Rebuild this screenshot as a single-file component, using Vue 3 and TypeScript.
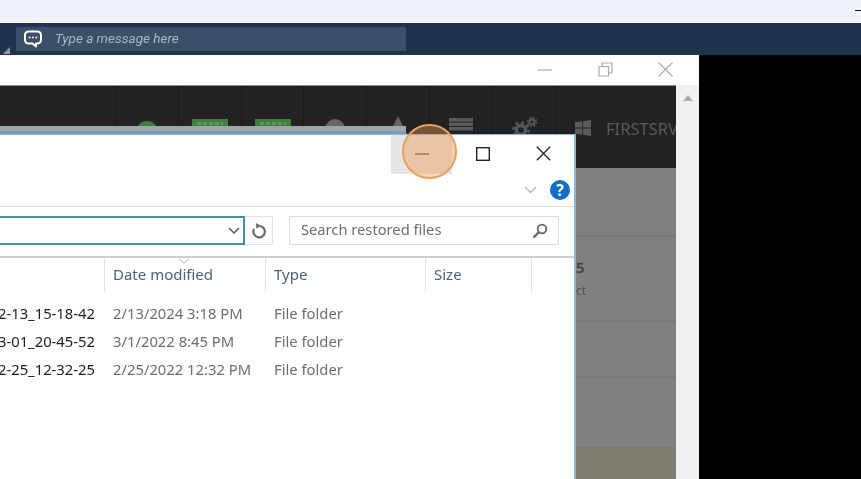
<script setup lang="ts">
interface HeaderCell {
  width: number
  kind: string
}

const headerCells: HeaderCell[] = [
  { width: 63, kind: 'dot' },
  { width: 63, kind: 'badge' },
  { width: 62, kind: 'badge' },
  { width: 63, kind: 'info' },
  { width: 63, kind: 'warn' },
  { width: 63, kind: 'server' },
  { width: 63, kind: 'gears' },
]

const columns = ['Date modified', 'Type', 'Size']

const rows = [
  { name: '2-13_15-18-42', date: '2/13/2024 3:18 PM', type: 'File folder' },
  { name: '3-01_20-45-52', date: '3/1/2022 8:45 PM', type: 'File folder' },
  { name: '2-25_12-32-25', date: '2/25/2022 12:32 PM', type: 'File folder' },
]
</script>

<template>
  <div class="screen">
    <div class="top-strip"><span class="top-dash"></span></div>

    <div class="chat-bar">
      <span class="grip"></span>
      <div class="chat-input">
        <svg class="chat-icon" width="20" height="20" viewBox="0 0 20 20" fill="none">
          <path d="M5.5 2.5h9a3.5 3.5 0 0 1 3.5 3.5v5a3.5 3.5 0 0 1-3.5 3.5h-1.5v3l-3.5-3H5.5A3.5 3.5 0 0 1 2 11V6a3.5 3.5 0 0 1 3.5-3.5z" stroke="#fff" stroke-width="2" stroke-linejoin="round" />
          <circle cx="6.6" cy="8.5" r="1" fill="#fff" />
          <circle cx="10" cy="8.5" r="1" fill="#fff" />
          <circle cx="13.4" cy="8.5" r="1" fill="#fff" />
        </svg>
        <span class="chat-placeholder">Type a message here</span>
      </div>
    </div>

    <div class="desktop">
      <div class="outer-window">
        <div class="outer-title">
          <svg class="outer-btn" width="15" height="15" viewBox="0 0 15 15" fill="none">
            <path d="M0 8h14" stroke="#b5b5b5" stroke-width="1.4" />
          </svg>
          <svg class="outer-btn" width="15" height="15" viewBox="0 0 15 15" fill="none">
            <path d="M1 4.5h9.500v9.500H1zM4 4.500V1h10v10h-3.500" stroke="#a9a9a9" stroke-width="1.200" />
          </svg>
          <svg class="outer-btn" width="15" height="15" viewBox="0 0 15 15" fill="none">
            <path d="M.5.500l14 14M14.500.500l-14 14" stroke="#b0b0b0" stroke-width="1.300" />
          </svg>
        </div>

        <div class="outer-body">
          <div class="app">
            <div class="app-header">
              <div class="header-spacer"></div>
              <div v-for="(cell, i) in headerCells" :key="i" class="header-cell" :style="{ width: cell.width + 'px' }">
                <span v-if="cell.kind === 'dot'" class="h-dot"></span>
                <span v-else-if="cell.kind === 'badge'" class="h-badge"><i></i></span>
                <span v-else-if="cell.kind === 'info'" class="h-info"></span>
                <span v-else-if="cell.kind === 'warn'" class="h-warn"></span>
                <svg v-else-if="cell.kind === 'server'" width="24" height="18" viewBox="0 0 24 18" fill="#5a5a5a">
                  <rect x="0" y="2" width="24" height="3.500" />
                  <rect x="0" y="6.500" width="24" height="3.500" />
                  <rect x="0" y="11" width="24" height="3.500" />
                </svg>
                <svg v-else width="27" height="24" viewBox="0 0 27 24" fill="none" stroke="#585858">
                  <circle cx="10" cy="14" r="4.500" stroke-width="3.400" />
                  <circle cx="10" cy="14" r="7.500" stroke-width="2.600" stroke-dasharray="2.800 3.100" />
                  <circle cx="21" cy="6" r="2.600" stroke-width="2" />
                  <circle cx="21" cy="6" r="4.400" stroke-width="1.800" stroke-dasharray="1.800 1.650" />
                </svg>
              </div>
              <div class="server-name">
                <svg width="16" height="16" viewBox="0 0 17 17" fill="#5c5c5c">
                  <path d="M0 2.500l7.700-1.200v6.800H0zM8.600 1.200L17 0v8.100H8.600zM0 9h7.700v6.800L0 14.600zM8.600 9H17v8l-8.400-1.200z" />
                </svg>
                <span>FIRSTSRV</span>
              </div>
            </div>

            <div class="panel panel-a"></div>
            <div class="panel panel-b">
              <div class="peek-num">5</div>
              <div class="peek-sub">ct</div>
            </div>
            <div class="panel panel-c"></div>
            <div class="panel panel-d"></div>
            <div class="panel panel-e"></div>
          </div>

          <div class="scrollbar">
            <span class="scroll-up"></span>
          </div>
        </div>
      </div>
      <div class="black"></div>

      <!-- dialog window floats over the app -->
      <div class="dialog-shadow"></div>
      <div class="dialog">
        <div class="caption">
          <button class="cap-btn hovered">
            <svg width="14" height="14" viewBox="0 0 14 14"><path d="M0 7h14" stroke="#3a3a3a" stroke-width="1.200" /></svg>
          </button>
          <button class="cap-btn">
            <svg width="14" height="14" viewBox="0 0 14 14" fill="none"><rect x=".7" y=".7" width="12.600" height="12.600" stroke="#222" stroke-width="1.400" /></svg>
          </button>
          <button class="cap-btn">
            <svg width="15" height="15" viewBox="0 0 15 15" fill="none"><path d="M.8.800l13.400 13.400M14.200.800L.8 14.200" stroke="#222" stroke-width="1.300" /></svg>
          </button>
        </div>

        <div class="ribbon">
          <svg width="13" height="8" viewBox="0 0 13 8" fill="none"><path d="M1 1l5.500 5.500L12 1" stroke="#b4b4b4" stroke-width="1.300" /></svg>
          <span class="help">?</span>
        </div>

        <div class="address-row">
          <div class="address">
            <svg width="12" height="8" viewBox="0 0 12 8" fill="none"><path d="M1 1l5 5 5-5" stroke="#555" stroke-width="1.500" /></svg>
          </div>
          <div class="refresh">
            <svg width="16" height="16" viewBox="0 0 16 16" fill="none">
              <path d="M8.500 3A5.700 5.700 0 1 1 3.100 6" stroke="#6a6a6a" stroke-width="2.200" />
              <path d="M5 0l4.800 2.800L5.400 5.800z" fill="#6a6a6a" />
            </svg>
          </div>
          <div class="search">
            <span class="search-text">Search restored files</span>
            <svg width="16" height="16" viewBox="0 0 16 16" fill="none">
              <circle cx="10" cy="6" r="4.300" stroke="#666" stroke-width="1.800" />
              <path d="M7 9l-5.500 5.500" stroke="#666" stroke-width="2.400" />
            </svg>
          </div>
        </div>

        <div class="file-table">
          <div class="col-head name-col"></div>
          <div v-for="(col, i) in columns" :key="col" class="col-head">
            {{ col }}
            <svg v-if="i === 0" class="sort-mark" width="12" height="6" viewBox="0 0 12 6" fill="none"><path d="M1 .5l5 4.500 5-4.500" stroke="#b5b5b5" /></svg>
          </div>
          <div class="col-head last-col"></div>

          <div class="table-gap"></div>

          <template v-for="row in rows" :key="row.name">
            <div class="cell name-cell"><span>{{ row.name }}</span></div>
            <div class="cell">{{ row.date }}</div>
            <div class="cell">{{ row.type }}</div>
            <div class="cell"></div>
            <div class="cell"></div>
          </template>
        </div>
      </div>

      <!-- highlight ring from the walkthrough tool -->
      <div class="spotlight"></div>
    </div>
  </div>
</template>

<style>
html,
body {
  margin: 0;
  background: #000;
}
</style>

<style scoped>
.screen {
  width: 861px;
  height: 479px;
  overflow: hidden;
  display: flex;
  flex-direction: column;
  font-family: "Noto Sans", "Open Sans", sans-serif;
  filter: blur(0.35px);
}

.top-strip {
  height: 23px;
  background: #f1f3fa;
  position: relative;
  flex-shrink: 0;
}
.top-dash {
  position: absolute;
  right: 0;
  top: 10px;
  width: 6px;
  height: 1px;
  background: #111;
}

.chat-bar {
  height: 32px;
  background: #1e344e;
  padding: 4px 0 4px 16px;
  box-sizing: border-box;
  position: relative;
  flex-shrink: 0;
}
.grip {
  position: absolute;
  left: 3px;
  bottom: 1px;
  width: 0;
  height: 0;
  border-left: 7px solid transparent;
  border-bottom: 7px solid #8a99aa;
}
.chat-input {
  width: 390px;
  height: 24px;
  background: #3b5068;
  display: flex;
  align-items: center;
  padding-left: 7px;
  box-sizing: border-box;
}
.chat-icon {
  flex-shrink: 0;
}
.chat-placeholder {
  margin-left: 12px;
  margin-top: -2px;
  font-family: Roboto, sans-serif;
  font-style: italic;
  font-size: 13.5px;
  color: #a9b5c3;
}

.desktop {
  flex: 1;
  display: flex;
  position: relative;
  min-height: 0;
}
.outer-window {
  width: 699px;
  display: flex;
  flex-direction: column;
  background: #fff;
}
.black {
  flex: 1;
  background: #000;
}
.outer-title {
  height: 30px;
  flex-shrink: 0;
  display: flex;
  align-items: center;
  justify-content: flex-end;
  gap: 45px;
  padding-right: 26px;
  padding-bottom: 2px;
  box-sizing: border-box;
}

.outer-body {
  flex: 1;
  display: flex;
  min-height: 0;
}
.app {
  width: 676px;
  display: flex;
  flex-direction: column;
  background: #808080;
}
.scrollbar {
  flex: 1;
  background: #f0f0f0;
  display: flex;
  justify-content: center;
  padding-top: 10px;
}
.scroll-up {
  width: 0;
  height: 0;
  border-left: 5px solid transparent;
  border-right: 5px solid transparent;
  border-bottom: 6px solid #a8a8a8;
}

.app-header {
  height: 83px;
  flex-shrink: 0;
  display: flex;
  background: #222;
  border-top: 1px solid #8d8d8d;
  box-sizing: border-box;
}
.header-spacer {
  width: 115px;
}
.header-cell {
  flex-shrink: 0;
  border-left: 1px solid #1a1a1a;
  box-sizing: border-box;
  display: flex;
  justify-content: center;
  padding-top: 30px;
}
.h-dot {
  width: 22px;
  height: 22px;
  border-radius: 50%;
  background: #3f7d3f;
  margin-top: 5px;
}
.h-badge {
  width: 36px;
  height: 20px;
  background: #3f8040;
  margin-top: 3px;
  padding: 3px 5px 0;
  box-sizing: border-box;
}
.h-badge i {
  display: block;
  height: 3px;
  background: repeating-linear-gradient(90deg, #5f9663 0 4px, #3f8040 4px 6px);
}
.h-info {
  width: 20px;
  height: 20px;
  border-radius: 50%;
  background: #666;
  margin-top: 3px;
}
.h-warn {
  width: 0;
  height: 0;
  border-left: 10px solid transparent;
  border-right: 10px solid transparent;
  border-bottom: 20px solid #666;
}
.server-name {
  flex: 1;
  min-width: 0;
  overflow: hidden;
  display: flex;
  align-items: flex-start;
  gap: 15px;
  padding: 34px 0 0 19px;
  border-left: 1px solid #1a1a1a;
  color: #5a5a5a;
  font-size: 16.5px;
  white-space: nowrap;
  line-height: 17px;
}
.server-name svg {
  flex-shrink: 0;
}

.panel {
  box-sizing: border-box;
  border-bottom: 2px solid #787878;
  flex-shrink: 0;
}
.panel-a {
  height: 69px;
}
.panel-b {
  height: 85px;
  padding: 21px 0 0 576px;
  color: #3e3e3e;
}
.panel-c {
  height: 56px;
}
.panel-d {
  height: 71px;
}
.panel-e {
  flex: 1;
  border-bottom: 0;
  background: #7f7d70;
}
.peek-num {
  font-size: 15px;
  line-height: 18px;
  font-weight: 600;
}
.peek-sub {
  font-size: 12px;
  line-height: 14px;
  margin-top: 8px;
  color: #555;
}

.dialog-shadow {
  position: absolute;
  left: 0;
  top: 71px;
  width: 406px;
  height: 8px;
  background: linear-gradient(#9ea6aa 0 5px, #7b9ab3 5px 8px);
}
.dialog {
  position: absolute;
  left: 0;
  top: 79px;
  width: 576px;
  height: 345px;
  box-sizing: border-box;
  background: #fff;
  border-top: 1px solid #7fbde6;
  border-right: 2px solid #7fbde6;
  display: flex;
  flex-direction: column;
}
.caption {
  height: 39px;
  flex-shrink: 0;
  display: flex;
  justify-content: flex-end;
}
.cap-btn {
  width: 61px;
  height: 39px;
  padding: 0 0 2px;
  border: 0;
  background: transparent;
  display: flex;
  align-items: center;
  justify-content: center;
}
.hovered {
  background: #e5e5e5;
}

.ribbon {
  height: 33px;
  flex-shrink: 0;
  border-bottom: 1px solid #dcdcdc;
  box-sizing: border-box;
  display: flex;
  align-items: center;
  justify-content: flex-end;
  gap: 13px;
  padding: 0 4px 1px 0;
}
.help {
  width: 20px;
  height: 20px;
  border-radius: 50%;
  background: #0f6fc6;
  color: #fff;
  font-size: 16px;
  font-weight: 700;
  line-height: 20px;
  text-align: center;
}

.address-row {
  height: 51px;
  flex-shrink: 0;
  border-bottom: 2px solid #cfcfcf;
  box-sizing: border-box;
  display: flex;
  padding-top: 9px;
}
.address {
  width: 245px;
  height: 29px;
  box-sizing: border-box;
  border: 2px solid #4a8ea8;
  border-left: 0;
  display: flex;
  align-items: center;
  justify-content: flex-end;
  padding-right: 3px;
}
.refresh {
  width: 28px;
  height: 29px;
  box-sizing: border-box;
  border: 1px solid #e2e2e2;
  border-left: 0;
  display: flex;
  align-items: center;
  justify-content: center;
}
.search {
  margin-left: 16px;
  width: 270px;
  height: 29px;
  box-sizing: border-box;
  border: 1px solid #dcdcdc;
  display: flex;
  align-items: center;
  justify-content: space-between;
  padding: 0 10px 0 11px;
  color: #6d6d6d;
  font-size: 14.7px;
}
.search-text {
  margin-top: -4px;
}

.file-table {
  display: grid;
  grid-template-columns: 105px 161px 160px 106px 1fr;
  grid-auto-rows: 28px;
  grid-template-rows: 34px 7px;
  font-size: 14.8px;
}
.col-head {
  position: relative;
  border-right: 1px solid #e2e2e2;
  box-sizing: border-box;
  padding-left: 8px;
  line-height: 33px;
  color: #4c607a;
  font-size: 15px;
}
.name-col {
  padding: 0;
}
.last-col {
  border-right: 0;
}
.sort-mark {
  position: absolute;
  left: 73px;
  top: 0;
}
.table-gap {
  grid-column: 1 / -1;
}
.cell {
  padding-left: 8px;
  line-height: 28px;
  color: #6d6d6d;
  white-space: nowrap;
}
.name-cell {
  display: flex;
  justify-content: flex-end;
  padding: 0 10px 0 0;
  color: #1e1e1e;
  overflow: hidden;
}
.name-cell span {
  flex-shrink: 0;
}

.spotlight {
  position: absolute;
  left: 402px;
  top: 69px;
  width: 55px;
  height: 55px;
  box-sizing: border-box;
  border-radius: 50%;
  border: 2px solid #eb9f5c;
  background: rgba(240, 150, 80, 0.42);
}
</style>
